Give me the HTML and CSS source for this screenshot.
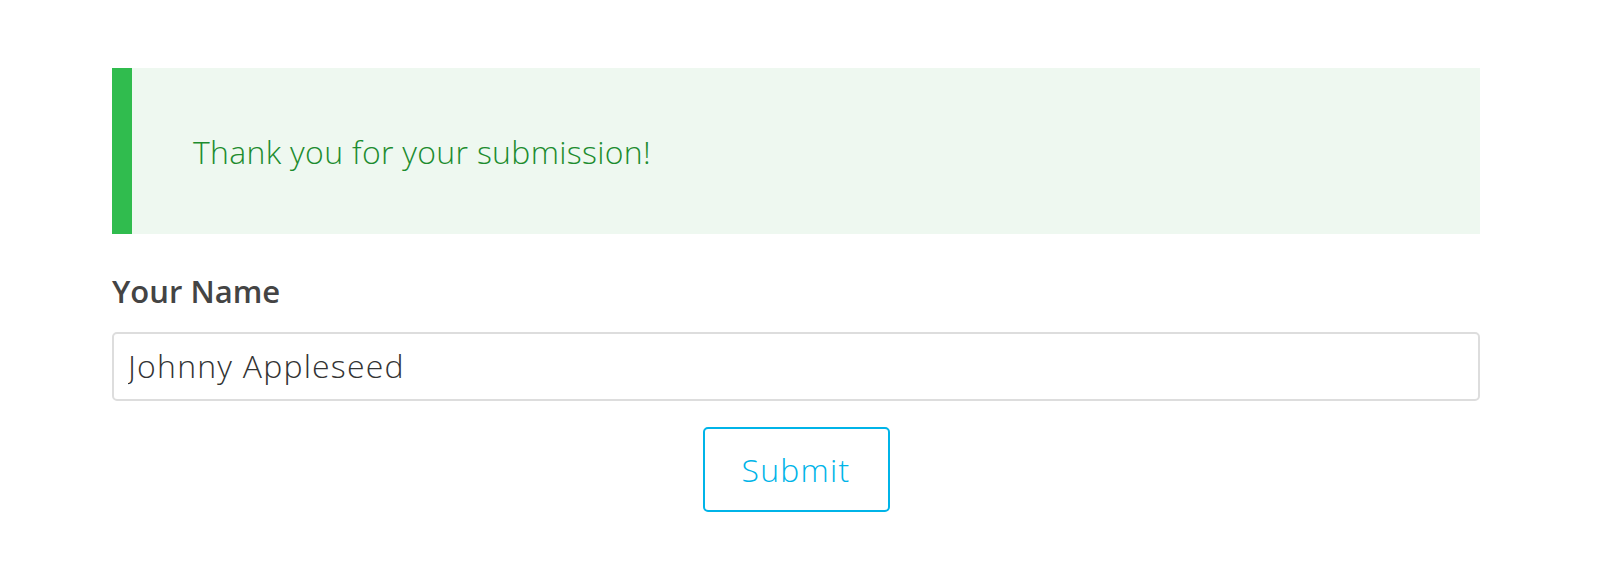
FILE: index.html
```html
<!DOCTYPE html>
<html>
<head>
<meta charset="utf-8">
<link rel="stylesheet" href="styles.css">
</head>
<body>
<div class="page">
  <div class="alert">Thank you for your submission!</div>
  <form class="form">
    <label class="label" for="name">Your Name</label>
    <input class="input" id="name" type="text" value="Johnny Appleseed">
    <div class="actions">
      <button class="btn" type="button">Submit</button>
    </div>
  </form>
</div>
</body>
</html>
```

FILE: styles.css
```css
html, body {
  margin: 0;
  padding: 0;
  background: #ffffff;
}
.page {
  width: 1368px;
  padding: 68px 0 0 112px;
  font-family: "Open Sans", Lato, sans-serif;
}
.alert {
  box-sizing: border-box;
  height: 166px;
  display: flex;
  align-items: center;
  background: #eef8f0;
  border-left: 20px solid #30bc4e;
  padding: 0 61px;
  color: #1c8c2e;
  font-size: 32px;
  font-weight: 300;
  letter-spacing: 0.3px;
}
.form {
  display: flex;
  flex-direction: column;
}
.label {
  margin-top: 41px;
  line-height: 32px;
  font-size: 31px;
  font-weight: 600;
  color: #444444;
}
.input {
  box-sizing: border-box;
  margin-top: 25px;
  height: 69px;
  width: 100%;
  border: 2px solid #dddddd;
  border-radius: 5px;
  padding: 0 14px 3px;
  font-family: inherit;
  font-size: 32px;
  font-weight: 300;
  letter-spacing: 1.2px;
  color: #333333;
  background: #ffffff;
  outline: none;
}
.actions {
  display: flex;
  justify-content: center;
  margin-top: 26px;
}
.btn {
  box-sizing: border-box;
  width: 187px;
  height: 85px;
  border: 2px solid #00b4e8;
  border-radius: 5px;
  background: #ffffff;
  color: #00b4e8;
  font-family: inherit;
  font-size: 32px;
  font-weight: 300;
  letter-spacing: 1.2px;
  cursor: pointer;
}
```
